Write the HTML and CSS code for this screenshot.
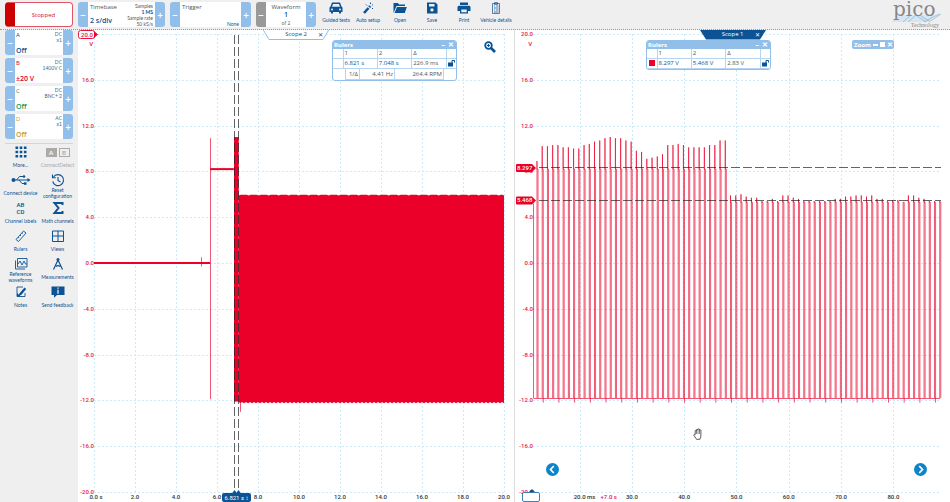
FILE: index.html
```html
<!DOCTYPE html>
<html lang="en">
<head>
  <meta charset="UTF-8">
  <title>Pico Automotive</title>
  <link rel="stylesheet" href="styles.css">
</head>
<body>
  <header class="topbar">
    <button class="stopped" type="button">Stopped</button>

    <div class="card timebase">
      <button type="button" class="step">−</button>
      <div class="card-body">
        <div class="card-main"><span>Timebase</span><b>2 s/div</b></div>
        <div class="card-side"><span>Samples</span><b>1 MS</b><span>Sample rate</span><span>50 kS/s</span></div>
      </div>
      <button type="button" class="step">+</button>
    </div>

    <div class="card trigger">
      <button type="button" class="step">−</button>
      <div class="card-body">
        <div class="card-main"><span>Trigger</span></div>
        <div class="card-side bottom"><span>None</span></div>
      </div>
      <button type="button" class="step">+</button>
    </div>

    <div class="card waveform">
      <button type="button" class="step grey">−</button>
      <div class="card-body center"><span>Waveform</span><b>1</b><small>of 2</small></div>
      <button type="button" class="step">+</button>
    </div>

    <nav class="actions">
      <button type="button" class="action">
        <svg viewBox="0 0 14 12"><path fill="currentColor" fill-rule="evenodd" d="M3 .5h8l1.500 4 1 1V10H12v1.500h-2V10H4v1.500H2V10H.5V5.500l1-1zM4 2l-1 2.800h8L10 2zM3 6.500a1 1 0 100 2 1 1 0 000-2zm8 0a1 1 0 100 2 1 1 0 000-2z"/></svg>
        <span>Guided tests</span>
      </button>
      <button type="button" class="action">
        <svg viewBox="0 0 14 12"><path d="M3 11l4.500-5" stroke="currentColor" stroke-width="2.600"/><path d="M8.200 5.200l1-1.200" stroke="currentColor" stroke-width="2.600"/><path d="M5 2.500l1 1M9.500.5v1.500M12 2.500l-1 .8M11 6l1 1" stroke="currentColor" stroke-width="1"/></svg>
        <span>Auto setup</span>
      </button>
      <button type="button" class="action">
        <svg viewBox="0 0 14 12"><path fill="currentColor" d="M.5 11V1h4.500l1 1.500h6V4H3.500zM4 5h9.800l-2 6H1.500z"/></svg>
        <span>Open</span>
      </button>
      <button type="button" class="action">
        <svg viewBox="0 0 14 12"><path fill="currentColor" fill-rule="evenodd" d="M2 .5h8.500l2 2v9H2zM4 2v2.500h5.500V2zM7 6.200a1.700 1.700 0 100 3.400 1.700 1.700 0 000-3.400z"/></svg>
        <span>Save</span>
      </button>
      <button type="button" class="action">
        <svg viewBox="0 0 14 12"><path fill="currentColor" fill-rule="evenodd" d="M3 .5h8V3H3zM1.500 3.800h11l1 1V9H11v2.500H3V9H.5V4.800zM4.300 7.500v2.700h5.400V7.500z"/></svg>
        <span>Print</span>
      </button>
      <button type="button" class="action">
        <svg viewBox="0 0 14 12"><path fill="none" stroke="currentColor" stroke-width=".7" d="M3.500 1.500h7v10h-7zM5.500.6h3v1.800h-3zM5 4h1M7 4h2.500M5 6h4.500M5 8h1M7 8h2.500M5 10h4.500"/></svg>
        <span>Vehicle details</span>
      </button>
    </nav>

    <svg class="logo" viewBox="0 0 60 29">
      <path d="M6 22l10-7h12l8 7zM28 15h22l-7 7h-7z" fill="#d5e6f2"/>
      <path d="M18 22l8-7M23 22l8-7M32 16l9 6M36 16l8 5M39 22l15-8M44 22l12-8" stroke="#8db9d9" stroke-width=".8"/>
      <text x="8" y="16" class="logo-name">pico</text>
      <text x="54" y="27" class="logo-sub">Technology</text>
    </svg>
  </header>

  <div class="workspace">
    <aside class="sidebar">
      <div class="channels">
        <div class="card channel a">
          <button type="button" class="step">−</button>
          <div class="card-body"><div class="card-main"><span>A</span><b>Off</b></div><div class="card-side"><span>DC</span><span>x1</span></div></div>
          <button type="button" class="step">+</button>
        </div>
        <div class="card channel b">
          <button type="button" class="step">−</button>
          <div class="card-body"><div class="card-main"><span>B</span><b>±20 V</b></div><div class="card-side"><span>DC</span><span>1400V C</span></div></div>
          <button type="button" class="step">+</button>
        </div>
        <div class="card channel c">
          <button type="button" class="step">−</button>
          <div class="card-body"><div class="card-main"><span>C</span><b>Off</b></div><div class="card-side"><span>DC</span><span>BNC+ 2</span></div></div>
          <button type="button" class="step">+</button>
        </div>
        <div class="card channel d">
          <button type="button" class="step">−</button>
          <div class="card-body"><div class="card-main"><span>D</span><b>Off</b></div><div class="card-side"><span>AC</span><span>x1</span></div></div>
          <button type="button" class="step">+</button>
        </div>
      </div>

      <div class="tools">
        <button type="button" class="tool">
          <svg viewBox="0 0 20 14"><path fill="currentColor" d="M4.500 1.500h2.600v2.600H4.500zm4.200 0h2.600v2.600H8.700zm4.200 0h2.600v2.600h-2.600zM4.500 5.700h2.600v2.600H4.500zm4.200 0h2.600v2.600H8.700zm4.200 0h2.600v2.600h-2.600zM4.500 9.900h2.600v2.600H4.500zm4.200 0h2.600v2.600H8.700zm4.200 0h2.600v2.600h-2.600z"/></svg>
          <span>More...</span>
        </button>
        <button type="button" class="tool" disabled>
          <span class="ab"><i>A</i><i>B</i></span>
          <span>ConnectDetect</span>
        </button>
        <button type="button" class="tool">
          <svg viewBox="0 0 20 14"><g fill="none" stroke="currentColor" stroke-width="1"><path d="M2 7h15M5.500 7l3-3.500h4M8 7l3 3.500h3"/></g><g fill="currentColor"><circle cx="2.500" cy="7" r="2"/><path d="M16.500 5l3 2-3 2z"/><circle cx="13" cy="3.500" r="1.300"/><path d="M13 9.300h2.500v2.500H13z"/></g></svg>
          <span>Connect device</span>
        </button>
        <button type="button" class="tool">
          <svg viewBox="0 0 20 14"><g fill="none" stroke="currentColor" stroke-width="1.100"><path d="M5.500 4a5.500 5.500 0 11-.8 4.500M4.500 1.500v3.200h3.300"/><path d="M10 4v3.500l2.500 1.500"/></g></svg>
          <span>Reset configuration</span>
        </button>
        <button type="button" class="tool">
          <span class="abcd"><i>AB</i><i>CD</i></span>
          <span>Channel labels</span>
        </button>
        <button type="button" class="tool">
          <svg viewBox="0 0 20 14"><path fill="none" stroke="currentColor" stroke-width="2" d="M14.500 4V2H6.500l4 5-4 5h8v-2"/></svg>
          <span>Math channels</span>
        </button>
        <button type="button" class="tool">
          <svg viewBox="0 0 20 14"><path fill="none" stroke="currentColor" stroke-width=".9" d="M5 10.500l7.500-8.500 2.500 2-7.500 8.500zM7 8.200l1 .8M9 6l1 .8M11 3.700l1 .8"/></svg>
          <span>Rulers</span>
        </button>
        <button type="button" class="tool">
          <svg viewBox="0 0 20 14"><path fill="none" stroke="currentColor" d="M4.500 2h11v10.500h-11zM10 2v10.500M4.500 7h11"/></svg>
          <span>Views</span>
        </button>
        <button type="button" class="tool">
          <svg viewBox="0 0 20 14"><path fill="none" stroke="currentColor" stroke-width=".9" d="M6.500 1.500h9.500v8.500H6.500zM4.500 3.500v8.500H14M7 7l2-3 2 4 2-4 1.500 3H16"/></svg>
          <span>Reference waveforms</span>
        </button>
        <button type="button" class="tool">
          <svg viewBox="0 0 20 14"><path fill="none" stroke="currentColor" stroke-width="1.200" d="M10 3L5.500 12.500M10 3l4.500 9.500M8 9.500c1-1 3-1 4.200 0"/><circle cx="10" cy="2.500" r="1.500" fill="currentColor"/></svg>
          <span>Measurements</span>
        </button>
        <button type="button" class="tool">
          <svg viewBox="0 0 20 14"><path fill="none" stroke="currentColor" stroke-width=".9" d="M12 2H6v9.500h8V8"/><path fill="currentColor" d="M13.500 2.500l1.700 1.500-5 6-2.500.8.700-2.400zM6 8l4 3.500H6z"/></svg>
          <span>Notes</span>
        </button>
        <button type="button" class="tool">
          <svg viewBox="0 0 20 14"><path fill="currentColor" d="M3.500 1.500h13v8.500H9l-3 2.800V10H3.500z"/><path stroke="#fff" stroke-width="1.200" d="M10 2.500v1.200M10 4.700v4"/></svg>
          <span>Send feedback</span>
        </button>
      </div>
    </aside>

    <main class="scopes">
      <section class="scope">
        <svg class="chart" id="chart2"></svg>
        <div class="tab">
          <svg viewBox="0 0 66 10"><path fill="#fff" stroke="#92bfea" d="M0-.5l6 10h54l6-10"/></svg>
          <span>Scope 2</span><button type="button">✕</button>
        </div>
        <div class="ruler-box wide">
          <div class="box-title"><span>Rulers</span><button type="button">–</button><button type="button">✕</button></div>
          <table>
            <tr><td class="mark"></td><td>1</td><td>2</td><td>Δ</td><td class="mark"></td></tr>
            <tr class="values"><td></td><td>6.821 s</td><td>7.048 s</td><td class="delta">226.9 ms</td><td><svg class="lock" viewBox="0 0 8 8"><path d="M0 3.500h5v4H0z" fill="#0b5394"/><path d="M4 4V1.500h2.500v2" fill="none" stroke="#0b5394"/></svg></td></tr>
          </table>
          <table class="freq">
            <tr><td class="inv">1/Δ</td><td>4.41 Hz</td><td class="rpm">264.4 RPM</td></tr>
          </table>
        </div>
        <button type="button" class="zoom-tool">
          <svg viewBox="0 0 12 12"><circle cx="4.500" cy="4.500" r="3.300" fill="none" stroke="currentColor" stroke-width="1.800"/><path d="M7 7l4 4" stroke="currentColor" stroke-width="2.600"/><path d="M3 4.500h3M4.500 3v3" stroke="currentColor"/></svg>
        </button>
        <button type="button" class="time-tag">6.821 s ↕</button>
      </section>

      <section class="scope second">
        <svg class="chart" id="chart1"></svg>
        <div class="tab active">
          <svg viewBox="0 0 66 10"><path fill="#0b5394" d="M0 0h66l-6 9.500H6z"/></svg>
          <span>Scope 1</span><button type="button">✕</button>
        </div>
        <div class="ruler-box">
          <div class="box-title"><span>Rulers</span><button type="button">–</button><button type="button">✕</button></div>
          <table>
            <tr><td class="mark"></td><td>1</td><td>2</td><td>Δ</td><td class="mark"></td></tr>
            <tr class="values"><td><i class="swatch"></i></td><td>8.297 V</td><td>5.468 V</td><td class="delta">2.83 V</td><td><svg class="lock" viewBox="0 0 8 8"><path d="M0 3.500h5v4H0z" fill="#0b5394"/><path d="M4 4V1.500h2.500v2" fill="none" stroke="#0b5394"/></svg></td></tr>
          </table>
        </div>
        <div class="zoom-box box-title"><span>Zoom</span><i class="bar"></i><i class="square"></i><button type="button">✕</button></div>
        <button type="button" class="nav prev"><svg viewBox="0 0 13 13"><path d="M7.800 3L4.500 6.500 7.800 10" fill="none" stroke="#fff" stroke-width="1.700"/></svg></button>
        <button type="button" class="nav next"><svg viewBox="0 0 13 13"><path d="M5.200 3l3.300 3.500L5.200 10" fill="none" stroke="#fff" stroke-width="1.700"/></svg></button>
        <svg class="hand" viewBox="0 0 10 12"><path fill="#fff" stroke="#333" stroke-width=".8" d="M3 10.500L1 7.500c-.6-1 .5-1.500 1.200-.8V3c0-1 1.300-1 1.300 0V2c0-1 1.500-1 1.500 0v-.5c0-1 1.500-1 1.500 0V2.500c0-1 1.400-1 1.400 0V8c0 1.500-.7 2-1 3.300H3.500z"/><path fill="none" stroke="#333" stroke-width=".6" d="M3.500 3v3M5 2v4M6.500 2.500v3.500"/></svg>
        <button type="button" class="time-box" aria-label="Time ruler"></button>
      </section>
    </main>
  </div>

  <script src="script.js"></script>
</body>
</html>
```
FILE: styles.css
```css
* {
  box-sizing: border-box;
}

body {
  margin: 0;
  height: 100vh;
  display: flex;
  flex-direction: column;
  overflow: hidden;
  background: #fff;
  color: #555;
  font-family: "Open Sans", sans-serif;
  font-size: 6px;
  line-height: 8px;
}

button {
  border: none;
  background: none;
  padding: 0;
  font: inherit;
  color: inherit;
  cursor: pointer;
}

svg {
  display: block;
}

i {
  font-style: normal;
}

/* top bar */
.topbar {
  display: flex;
  gap: 5px;
  height: 30px;
  flex: none;
  padding: 2px 5px 2px;
  background: #efefef;
  border-bottom: 1px dotted #999;
}

.stopped {
  width: 68px;
  background: #fff;
  border: 1px solid #dd5566;
  border-left: 10px solid #cc0000;
  border-radius: 4px;
  color: #d5112b;
}

.card {
  display: flex;
  background: #fff;
  border-radius: 3px;
  overflow: hidden;
}

.step {
  width: 10px;
  flex: none;
  background: #92bfea;
  color: #fff;
  font-size: 10px;
  font-weight: 600;
}

.step.grey {
  background: #999;
}

.timebase {
  width: 87px;
}

.trigger {
  width: 81px;
}

.waveform {
  width: 60px;
}

.card-body {
  flex: 1;
  display: flex;
  justify-content: space-between;
  padding: 1px 2px 0;
  white-space: nowrap;
}

.card-main {
  display: flex;
  flex-direction: column;
  justify-content: space-between;
  padding-bottom: 2px;
}

.card-main b,
.center b {
  color: #0b5394;
  font-size: 7px;
  font-weight: 600;
}

.card-side {
  display: flex;
  flex-direction: column;
  text-align: right;
  font-family: Lato, sans-serif;
  font-size: 5px;
  line-height: 6px;
}

.card-side b {
  color: #0b5394;
}

.bottom {
  justify-content: flex-end;
  color: #0b5394;
}

.center {
  flex-direction: column;
  align-items: center;
  justify-content: flex-start;
}

.center small {
  font-size: 5px;
}

.actions {
  display: flex;
  margin-left: -1px;
}

.action {
  width: 32px;
  display: flex;
  flex-direction: column;
  align-items: center;
  color: #0b5394;
  font-family: Lato, sans-serif;
  font-size: 5px;
  line-height: 6px;
  gap: 3px;
  white-space: nowrap;
}

.action svg {
  width: 14px;
  height: 12px;
}

.logo {
  width: 60px;
  height: 29px;
  margin: -2px 0 0 auto;
}

.logo-name {
  font-family: "DejaVu Serif", serif;
  font-size: 20px;
  fill: #85878a;
}

.logo-sub {
  font-family: "Liberation Serif", serif;
  font-size: 6px;
  fill: #888;
  text-anchor: end;
}

/* left column */
.workspace {
  flex: 1;
  min-height: 0;
  display: flex;
}

.sidebar {
  width: 78px;
  flex: none;
  padding: 0 5px;
  background: #efefef;
}

.channels {
  display: flex;
  flex-direction: column;
  gap: 3px;
  padding-bottom: 4px;
  border-bottom: 1px solid #d5d5d5;
}

.channel {
  height: 25px;
  width: 68px;
}

.channel .card-body {
  padding: 1px 1px 0;
}

.channel .card-main {
  padding-bottom: 0;
}

.channel .card-side {
  color: #3a6a92;
}

.a .card-main,
.a b {
  color: #0b5394;
}

.b .card-main,
.b b {
  color: #d9002b;
}

.c .card-main,
.c b {
  color: #119955;
}

.d .card-main,
.d b {
  color: #c29a3a;
}

.tools {
  display: grid;
  grid-template-columns: 37px 37px;
  margin: 1px -3px 0;
}

.tool {
  height: 28px;
  display: flex;
  flex-direction: column;
  align-items: center;
  color: #0b5394;
  font-family: Lato, sans-serif;
  font-size: 5px;
  line-height: 6px;
}

.tool svg {
  width: 20px;
  height: 14px;
}

.tool > span:last-child {
  height: 12px;
  display: flex;
  align-items: center;
}

.tool:disabled {
  color: #aaa;
}

.ab {
  height: 14px;
  display: flex;
  gap: 2px;
  align-items: center;
  font-size: 6px;
  line-height: 7px;
  font-weight: 700;
}

.ab i {
  width: 11px;
  border: 1px solid #aaa;
}

.ab i:first-child {
  background: #aaa;
  color: #fff;
}

.abcd {
  height: 14px;
  display: grid;
  font: 500 6px/7px Roboto, sans-serif;
}

/* scope views */
.scopes {
  flex: 1;
  display: grid;
  grid-template-columns: 1fr 1fr;
}

.scope {
  position: relative;
  min-width: 0;
}

.second {
  border-left: 1px solid #ddd;
}

.chart {
  width: 100%;
  height: 100%;
  overflow: hidden;
  font-family: Roboto, sans-serif;
  font-size: 6px;
  font-weight: 500;
}

.grid {
  stroke: #cdeaf7;
  stroke-dasharray: 2 2;
}

.axis-v {
  fill: #e5173f;
  text-anchor: end;
}

.axis-t {
  fill: #333;
  text-anchor: middle;
}

.offset {
  fill: #e5173f;
}

.trace {
  fill: none;
  stroke: #ea0029;
}

.fill {
  fill: #ea0029;
}

.pulses {
  stroke-opacity: .65;
}

.ruler {
  stroke: #222;
  stroke-opacity: .7;
  stroke-dasharray: 9 3;
}

.tag-text {
  fill: #fff;
}

.tab {
  position: absolute;
  top: 0;
  left: calc(50% - 33px);
  width: 66px;
  height: 10px;
  display: flex;
  justify-content: flex-end;
  gap: 11px;
  padding-right: 6px;
  color: #0b5394;
}

.tab svg {
  position: absolute;
  inset: 0;
  width: 66px;
  height: 10px;
}

.tab span,
.tab button {
  position: relative;
  line-height: 9px;
}

.tab.active {
  color: #fff;
}

.ruler-box {
  position: absolute;
  top: 10px;
  left: 131px;
  width: 125px;
  background: #fff;
  border: 1px solid #92bfea;
  border-radius: 3px;
  overflow: hidden;
}

.ruler-box.wide {
  left: 254px;
}

.box-title {
  display: flex;
  align-items: center;
  gap: 3px;
  height: 9px;
  padding: 0 2px;
  background: #92bfea;
  color: #fff;
  font-weight: 700;
}

.box-title button {
  font-size: 7px;
}

.ruler-box .box-title {
  height: 8px;
  padding-left: 1px;
}

.ruler-box .box-title span {
  margin-right: auto;
}

.ruler-box table {
  width: 100%;
  border-collapse: collapse;
  table-layout: fixed;
}

.ruler-box td {
  height: 9px;
  padding: 0 1px;
  line-height: 8px;
  border: 1px solid #b5d5f2;
  white-space: nowrap;
}

.ruler-box tr:first-child td {
  border-top: none;
}

.ruler-box td:first-child {
  border-left: none;
}

.ruler-box td:last-child {
  border-right: none;
}

.mark {
  width: 10px;
}

.values {
  color: #0b5394;
}

.values td {
  height: 10px;
}

.delta {
  color: #555;
}

.ruler-box .freq {
  width: 99px;
  margin: 0 auto;
  border: 1px solid #b5d5f2;
  border-width: 0 1px;
}

.freq td {
  height: 11px;
  text-align: right;
}

.freq .inv {
  width: 14px;
}

.freq .rpm {
  width: 49px;
}

.lock {
  width: 8px;
  height: 8px;
}

.swatch {
  display: block;
  width: 6px;
  height: 6px;
  margin-left: 1px;
  background: #ea0029;
}

.zoom-box {
  position: absolute;
  top: 10px;
  right: 56px;
  width: 42px;
  border-radius: 2px;
}

.bar {
  width: 5px;
  height: 2px;
  flex: none;
  background: #fff;
}

.square {
  width: 5px;
  height: 5px;
  flex: none;
  background: #fff;
}

.zoom-box {
  gap: 2px;
}

.zoom-tool {
  position: absolute;
  top: 11px;
  right: 18px;
  width: 12px;
  color: #0b5394;
}

.time-tag {
  position: absolute;
  left: 144px;
  bottom: 0;
  width: 29px;
  height: 9px;
  border-radius: 2px;
  background: #0b5394;
  color: #fff;
  font-family: Roboto, sans-serif;
}

.time-box {
  position: absolute;
  left: 7px;
  bottom: 0;
  width: 18px;
  height: 10px;
  border: 1px solid #3d7fb8;
  border-radius: 2px;
  background: #fff;
}

.nav {
  position: absolute;
  bottom: 26px;
  width: 13px;
  height: 13px;
  border-radius: 50%;
  background: #0b84cc;
}

.prev {
  left: 31px;
}

.next {
  right: 23px;
}

.hand {
  position: absolute;
  left: 178px;
  bottom: 62px;
  width: 10px;
  height: 12px;
}
```
FILE: script.js
```js
const NS = 'http://www.w3.org/2000/svg';

// peak of every pulse in volts, one pulse per ms starting at 12 ms
const peaks = [
  8.9, 10.2, 10.2, 10.3, 10.3, 10.1, 10.1, 10, 10, 10.3, 10.4, 10.6, 10.7, 10.9, 11,
  10.9, 10.9, 10.7, 10.6, 9.8, 9.7, 9.1, 9.2, 9.3, 9.5, 10.3, 10.3, 10.4, 10.3, 10.1,
  10.1, 10.1, 10.1, 10.3, 10.3, 10.7, 10.7,
  5.9, 5.9, 6, 5.8, 5.7, 5.7, 5.4, 5.4, 5.6, 5.4, 5.9, 5.9, 5.7, 5.6, 5.4, 5.4, 5.4,
  5.4, 5.4, 5.4, 5.6, 5.6, 5.8, 5.8, 5.9, 5.9, 5.8, 5.9, 5.6, 5.6, 5.4, 5.5, 5.5,
  5.3, 5.9, 5.9, 5.7, 5.6, 5.4, 5.4, 5.4
];

function add(svg, name, attrs, text) {
  const el = document.createElementNS(NS, name);
  for (const key in attrs) el.setAttribute(key, attrs[key]);
  if (text) el.textContent = text;
  svg.appendChild(el);
  return el;
}

function setup(svg, opt) {
  svg.textContent = '';
  const w = svg.clientWidth;
  const h = svg.clientHeight;
  const right = w - opt.right;
  const bottom = h - 10;
  const x = t => opt.left + (t - opt.min) / (opt.max - opt.min) * (right - opt.left);
  const y = v => 4 + (20 - v) / 40 * (bottom - 4);
  const snap = n => Math.round(n) + 0.5;

  for (let v = -20; v <= 20; v += 4) {
    add(svg, 'path', { class: 'grid', d: `M${opt.left} ${snap(y(v))}H${right}` });
  }
  opt.ticks.forEach(t => {
    add(svg, 'path', { class: 'grid', d: `M${snap(x(t))} 4V${bottom}` });
  });
  return { x, y, snap, right, bottom };
}

function labels(svg, opt, s) {
  for (let v = -20; v <= 20; v += 4) {
    if (v === 20 && opt.badge) continue;
    add(svg, 'text', { class: 'axis-v', x: opt.left, y: s.y(v) + 2 }, v.toFixed(1));
  }
  add(svg, 'text', { class: 'axis-v', x: opt.left - 1, y: 16 }, 'V');
  opt.ticks.forEach((t, i) => {
    if (t > opt.lastLabel) return;
    const unit = i === 0 ? opt.unit : '';
    add(svg, 'text', { class: 'axis-t', x: s.x(t) + (i === 0 ? opt.shift : 0), y: s.bottom + 7 }, t.toFixed(1) + unit);
  });
}

function drawScope2() {
  const svg = document.getElementById('chart2');
  const opt = {
    left: 16, right: 10, min: 0, max: 20, badge: true, unit: ' s', shift: 2, lastLabel: 20,
    ticks: [0, 2, 4, 6, 8, 10, 12, 14, 16, 18, 20]
  };
  const s = setup(svg, opt);
  const { x, y } = s;

  add(svg, 'path', { class: 'trace', 'stroke-width': 2, d: `M${x(0)} ${y(0)}H${x(5.66)}` });
  add(svg, 'path', { class: 'trace pulses', d: `M${s.snap(x(5.2))} ${y(0.5)}V${y(-0.3)}` });
  add(svg, 'path', { class: 'trace pulses', d: `M${s.snap(x(5.66))} ${y(10.9)}V${y(-11.9)}` });
  add(svg, 'path', { class: 'trace', 'stroke-width': 2, d: `M${x(5.66)} ${y(8.2)}H${x(6.82)}` });

  // crank burst, then the dense part of the record
  const x1 = x(6.83), x2 = x(7.06);
  add(svg, 'rect', { class: 'fill', x: x1, y: y(11), width: x2 - x1, height: y(-12.1) - y(11) });
  let d = `M${x2} ${y(-12.1)}`;
  for (let px = x2, i = 0; px < s.right; px += 2, i++) {
    d += `L${px} ${y(i % 5 ? 5.95 : 5.9)}`;
  }
  d += `L${s.right} ${y(5.9)}`;
  for (let px = s.right, i = 0; px > x2; px -= 2, i++) {
    d += `L${px} ${y(i % 2 ? -12.15 : -12.25)}`;
  }
  add(svg, 'path', { class: 'fill', d: d + 'Z' });
  add(svg, 'path', { class: 'trace pulses', d: `M${s.snap(x(7.1))} ${y(-12)}V${y(-13)}` });

  [6.85, 7.06].forEach(t => {
    const px = Math.floor(x(t)) + 0.5;
    add(svg, 'path', { class: 'ruler', d: `M${px} 5V${s.bottom}` });
    add(svg, 'path', { fill: '#0b5394', d: `M${px - 3} ${s.bottom + 2}l3-4 3 4z` });
  });

  labels(svg, opt, s);
  add(svg, 'rect', { x: 0.5, y: 0.5, width: 16, height: 8, rx: 2, fill: '#fff', stroke: '#e5173f' });
  add(svg, 'path', { class: 'fill', d: 'M16 1l4 3.500-4 3.500z' });
  add(svg, 'text', { class: 'axis-v', x: 15, y: 7 }, '20.0');
}

function drawScope1() {
  const svg = document.getElementById('chart1');
  const opt = {
    left: 18, right: 9, min: 11.1, max: 89.1, unit: ' ms', shift: 5, lastLabel: 80,
    ticks: [20, 30, 40, 50, 60, 70, 80]
  };
  const s = setup(svg, opt);
  const { x, y } = s;

  let d = `M${x(11.2)} ${y(5.2)}V${y(-11.8)}`;
  peaks.forEach((peak, i) => {
    const t = 11.86 + i;
    const flat = i < 37 ? 8.2 : 5.3;
    const low = i % 3 === 1 ? -12.2 : -11.8;
    d += `M${x(t)} ${y(-11.8)}V${y(peak)}V${y(flat)}H${x(t + 0.2)}V${y(low)}`;
  });
  add(svg, 'path', { class: 'trace pulses', d });
  add(svg, 'path', { class: 'trace pulses', d: `M${x(11.2)} ${s.snap(y(-11.8))}H${s.right - 1}` });

  [8.297, 5.468].forEach(v => {
    const py = Math.floor(y(v)) + 0.5;
    add(svg, 'path', { class: 'ruler', d: `M24 ${py}H${s.right}` });
  });

  labels(svg, opt, s);
  add(svg, 'text', { class: 'offset', x: x(24), y: s.bottom + 7 }, '+7.0 s');
  add(svg, 'path', { fill: '#0b5394', d: `M14 ${s.bottom}l3-3 3 3z` });

  [8.297, 5.468].forEach(v => {
    const py = y(v);
    add(svg, 'path', { class: 'fill', d: `M2 ${py - 4}H17l4 4-4 4H2q-1 0-1-1v-6q0-1 1-1z` });
    add(svg, 'text', { class: 'tag-text', x: 2, y: py + 2 }, v.toFixed(3));
  });
}

function draw() {
  drawScope2();
  drawScope1();
}

window.addEventListener('resize', draw);
draw();
```
